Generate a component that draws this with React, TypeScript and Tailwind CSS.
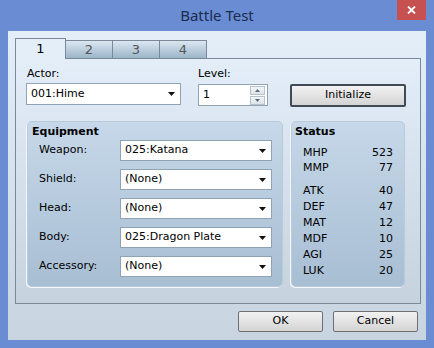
import React from 'react';

const font = { fontFamily: '"DejaVu Sans", Verdana, sans-serif' };

function Arrow() {
  return (
    <svg width="7" height="4" viewBox="0 0 7 4" className="shrink-0">
      <path d="M0 0 H7 L3.5 4 Z" fill="#111" />
    </svg>
  );
}

function Combo({ value, className }: { value: string; className: string }) {
  return (
    <div className={`flex items-center justify-between bg-white border border-[#8fa3b5] pl-[4px] pr-[5px] text-[11px] text-black ${className}`}>
      <span>{value}</span>
      <Arrow />
    </div>
  );
}

function WinButton({ label, className }: { label: string; className: string }) {
  return (
    <div className={`flex items-center justify-center rounded-[2px] bg-gradient-to-b from-[#f2f2f2] to-[#d4d4d4] text-[11px] text-black ${className}`}>
      {label}
    </div>
  );
}

const equipment = [
  ['Weapon:', '025:Katana'],
  ['Shield:', '(None)'],
  ['Head:', '(None)'],
  ['Body:', '025:Dragon Plate'],
  ['Accessory:', '(None)'],
];

const stats = [
  ['ATK', '40'],
  ['DEF', '47'],
  ['MAT', '12'],
  ['MDF', '10'],
  ['AGI', '25'],
  ['LUK', '20'],
];

export default function App() {
  return (
    <div className="w-[434px] h-[348px] bg-[#6a8cd3] flex flex-col" style={font}>
      {/* title bar */}
      <div className="relative h-[31px] flex items-center justify-center">
        <span className="text-[15px] text-[#1b2d4f]" style={{ fontFamily: '"Noto Sans", sans-serif' }}>
          Battle Test
        </span>
        <div className="absolute right-[8px] top-0 w-[29px] h-[20px] bg-[#c75050] flex items-center justify-center">
          <svg width="9" height="8" viewBox="0 0 9 8">
            <path d="M1 0.5 L8 7.5 M8 0.5 L1 7.5" stroke="#fff" strokeWidth="1.8" />
          </svg>
        </div>
      </div>

      {/* client */}
      <div className="mx-[8px] mb-[8px] flex-1 bg-gradient-to-b from-[#e3eef9] to-[#c8d4e0] flex flex-col">
        {/* tabs */}
        <div className="flex items-end ml-[7px] mt-[7px] h-[20px]">
          <div className="w-[51px] h-[21px] -mb-px relative z-10 bg-[#e3eef9] border border-b-0 border-[#7a8898] flex items-center justify-center text-[13px] text-black">
            1
          </div>
          {['2', '3', '4'].map((t) => (
            <div
              key={t}
              className="w-[48px] h-[18px] -ml-px first:ml-0 bg-gradient-to-b from-[#dbe7f1] to-[#9cb5c9] border border-b-0 border-[#7a8898] flex items-center justify-center text-[13px] text-[#555]"
            >
              {t}
            </div>
          ))}
        </div>

        {/* tab panel */}
        <div className="ml-[7px] mr-[5px] h-[246px] border border-[#7a8898] bg-gradient-to-b from-[#e3eef9] to-[#c6d2de] flex flex-col">
          <div className="flex mt-[8px] ml-[10px]">
            <div className="flex flex-col">
              <span className="text-[11px] text-black leading-[13px] ml-px">Actor:</span>
              <Combo value="001:Hime" className="mt-[3px] w-[155px] h-[22px]" />
            </div>
            <div className="flex flex-col ml-[17px]">
              <span className="text-[11px] text-black leading-[13px]">Level:</span>
              <div className="mt-[4px] w-[70px] h-[22px] bg-white border border-[#8fa3b5] flex items-center justify-between pl-[4px] pr-[2px] text-[11px]">
                <span>1</span>
                <div className="flex flex-col gap-px">
                  <div className="w-[15px] h-[9px] border border-[#b5c2ce] bg-gradient-to-b from-[#f4f6f8] to-[#dde3e9] flex items-center justify-center">
                    <svg width="5" height="3" viewBox="0 0 5 3"><path d="M0 3 H5 L2.5 0 Z" fill="#5a6a78" /></svg>
                  </div>
                  <div className="w-[15px] h-[9px] border border-[#b5c2ce] bg-gradient-to-b from-[#f4f6f8] to-[#dde3e9] flex items-center justify-center">
                    <svg width="5" height="3" viewBox="0 0 5 3"><path d="M0 0 H5 L2.5 3 Z" fill="#5a6a78" /></svg>
                  </div>
                </div>
              </div>
            </div>
            <WinButton label="Initialize" className="ml-[22px] mt-[17px] w-[116px] h-[23px] border-2 border-[#3f4a55]" />
          </div>

          <div className="flex mt-[14px] ml-[11px] gap-[8px]">
            {/* equipment */}
            <div className="w-[256px] h-[166px] rounded-[5px] bg-gradient-to-b from-[#c6d8e9] to-[#a8bed3] border border-[#b9cbdb] shadow-[-1px_1px_0_#f4f8fc] flex flex-col">
              <span className="text-[11px] font-bold text-black mt-[3px] ml-[4px] leading-[14px]">Equipment</span>
              <div className="flex flex-col gap-[8px] mt-[1px]">
                {equipment.map(([label, value]) => (
                  <div key={label} className="flex items-center">
                    <span className="w-[92px] pl-[11px] text-[11px] text-black">{label}</span>
                    <Combo value={value} className="w-[152px] h-[21px]" />
                  </div>
                ))}
              </div>
            </div>

            {/* status */}
            <div className="w-[114px] h-[166px] rounded-[5px] bg-gradient-to-b from-[#c6d8e9] to-[#a8bed3] border border-[#b9cbdb] shadow-[-1px_1px_0_#f4f8fc] flex flex-col text-[11px] text-black">
              <span className="font-bold mt-[3px] ml-[3px] leading-[14px]">Status</span>
              <div className="flex flex-col mt-[6px] pl-[11px] pr-[11px] leading-[15px]">
                <div className="flex justify-between"><span>MHP</span><span>523</span></div>
                <div className="flex justify-between"><span>MMP</span><span>77</span></div>
              </div>
              <div className="flex flex-col mt-[8px] pl-[11px] pr-[11px] leading-[16px]">
                {stats.map(([k, v]) => (
                  <div key={k} className="flex justify-between"><span>{k}</span><span>{v}</span></div>
                ))}
              </div>
            </div>
          </div>
        </div>

        {/* buttons */}
        <div className="flex justify-end mt-[7px] mr-[8px] gap-[10px]">
          <WinButton label="OK" className="w-[85px] h-[21px] border border-[#707070]" />
          <WinButton label="Cancel" className="w-[85px] h-[21px] border border-[#707070]" />
        </div>
      </div>
    </div>
  );
}
